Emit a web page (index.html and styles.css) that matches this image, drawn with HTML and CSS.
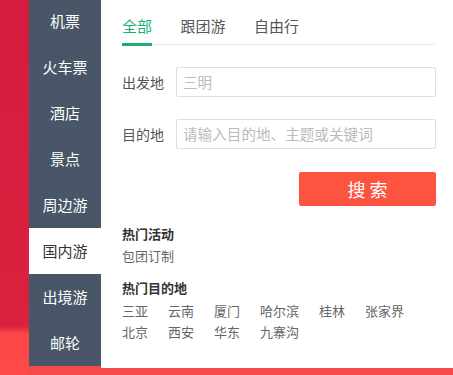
FILE: index.html
```html
<!DOCTYPE html>
<html lang="zh-CN">
<head>
<meta charset="utf-8">
<title>搜索</title>
<link rel="stylesheet" href="styles.css">
</head>
<body>
<div class="page">
  <div class="strip"></div>
  <nav class="nav">
    <ul class="nav-list">
      <li class="nav-item">机票</li>
      <li class="nav-item">火车票</li>
      <li class="nav-item">酒店</li>
      <li class="nav-item">景点</li>
      <li class="nav-item">周边游</li>
      <li class="nav-item nav-item-active">国内游</li>
      <li class="nav-item">出境游</li>
      <li class="nav-item">邮轮</li>
    </ul>
  </nav>
  <main class="panel">
    <div class="tabs">
      <span class="tab tab-active">全部</span>
      <span class="tab">跟团游</span>
      <span class="tab">自由行</span>
    </div>
    <div class="form-row">
      <label class="form-label">出发地</label>
      <div class="input"><span class="value">三明</span></div>
    </div>
    <div class="form-row">
      <label class="form-label">目的地</label>
      <div class="input"><span class="value">请输入目的地、主题或关键词</span></div>
    </div>
    <div class="actions">
      <button class="search-btn">搜 索</button>
    </div>
    <h3 class="hot-title hot-title-first">热门活动</h3>
    <div class="hot-sub">包团订制</div>
    <h3 class="hot-title">热门目的地</h3>
    <div class="cities cities-first">
      <span class="city">三亚</span>
      <span class="city">云南</span>
      <span class="city">厦门</span>
      <span class="city">哈尔滨</span>
      <span class="city">桂林</span>
      <span class="city">张家界</span>
    </div>
    <div class="cities">
      <span class="city">北京</span>
      <span class="city">西安</span>
      <span class="city">华东</span>
      <span class="city">九寨沟</span>
    </div>
  </main>
</div>
</body>
</html>
```

FILE: styles.css
```css
* { box-sizing: border-box; }
html, body {
  margin: 0;
  padding: 0;
}
body {
  width: 453px;
  height: 375px;
  overflow: hidden;
  background: #f44a4a;
  font-family: "Noto Sans CJK SC", "Noto Sans", sans-serif;
}
.page {
  display: flex;
  align-items: flex-start;
  height: 375px;
}
.strip {
  width: 29px;
  height: 375px;
  flex: none;
  background: linear-gradient(to bottom, #d41c3e 0, #da213f 326px, #fd4747 334px, #ff4a4a 375px);
}
.nav {
  width: 72px;
  height: 366px;
  flex: none;
  background: #485667;
  overflow: hidden;
}
.nav-list {
  list-style: none;
  margin: -2px 0 0;
  padding: 0;
}
.nav-item {
  height: 46px;
  line-height: 46px;
  text-align: center;
  color: #fff;
  font-size: 15px;
}
.nav-item-active {
  background: #fff;
  color: #333;
}
.panel {
  flex: 1;
  height: 368px;
  background: #fff;
  padding: 0 17px 0 21px;
}
.tabs {
  display: flex;
  gap: 28.5px;
  border-bottom: 1px solid #ececec;
  height: 45px;
}
.tab {
  padding-top: 14px;
  line-height: 24px;
  padding-bottom: 5px;
  height: 46px;
  border-bottom: 3px solid transparent;
  font-size: 15px;
  color: #555;
}
.tab-active {
  color: #19b06c;
  border-bottom-color: #19b06c;
}
.form-row {
  display: flex;
  align-items: center;
  gap: 12px;
  margin-top: 22px;
  height: 30px;
}
.form-label {
  font-size: 14px;
  color: #555;
  line-height: 30px;
  white-space: nowrap;
}
.input {
  flex: 1;
  height: 30px;
  border: 1px solid #dedede;
  border-radius: 2px;
  padding-left: 6px;
  line-height: 28px;
  font-size: 14.6px;
  color: #bbb;
}
.actions {
  display: flex;
  justify-content: flex-end;
  margin-top: 23px;
}
.search-btn {
  width: 137px;
  height: 34px;
  border: 0;
  border-radius: 2px;
  background: #fd5442;
  color: #fff;
  font-family: inherit;
  font-size: 18px;
  line-height: 34px;
  padding: 0;
}
.hot-title {
  margin: 10px 0 0;
  font-size: 13px;
  font-weight: bold;
  color: #333;
  line-height: 22px;
}
.hot-title-first {
  margin-top: 17px;
}
.hot-sub {
  font-size: 13px;
  color: #666;
  line-height: 22px;
}
.cities {
  display: flex;
  gap: 20px;
  font-size: 13px;
  color: #666;
  line-height: 21px;
}
.cities-first { margin-top: 1px; }
```
